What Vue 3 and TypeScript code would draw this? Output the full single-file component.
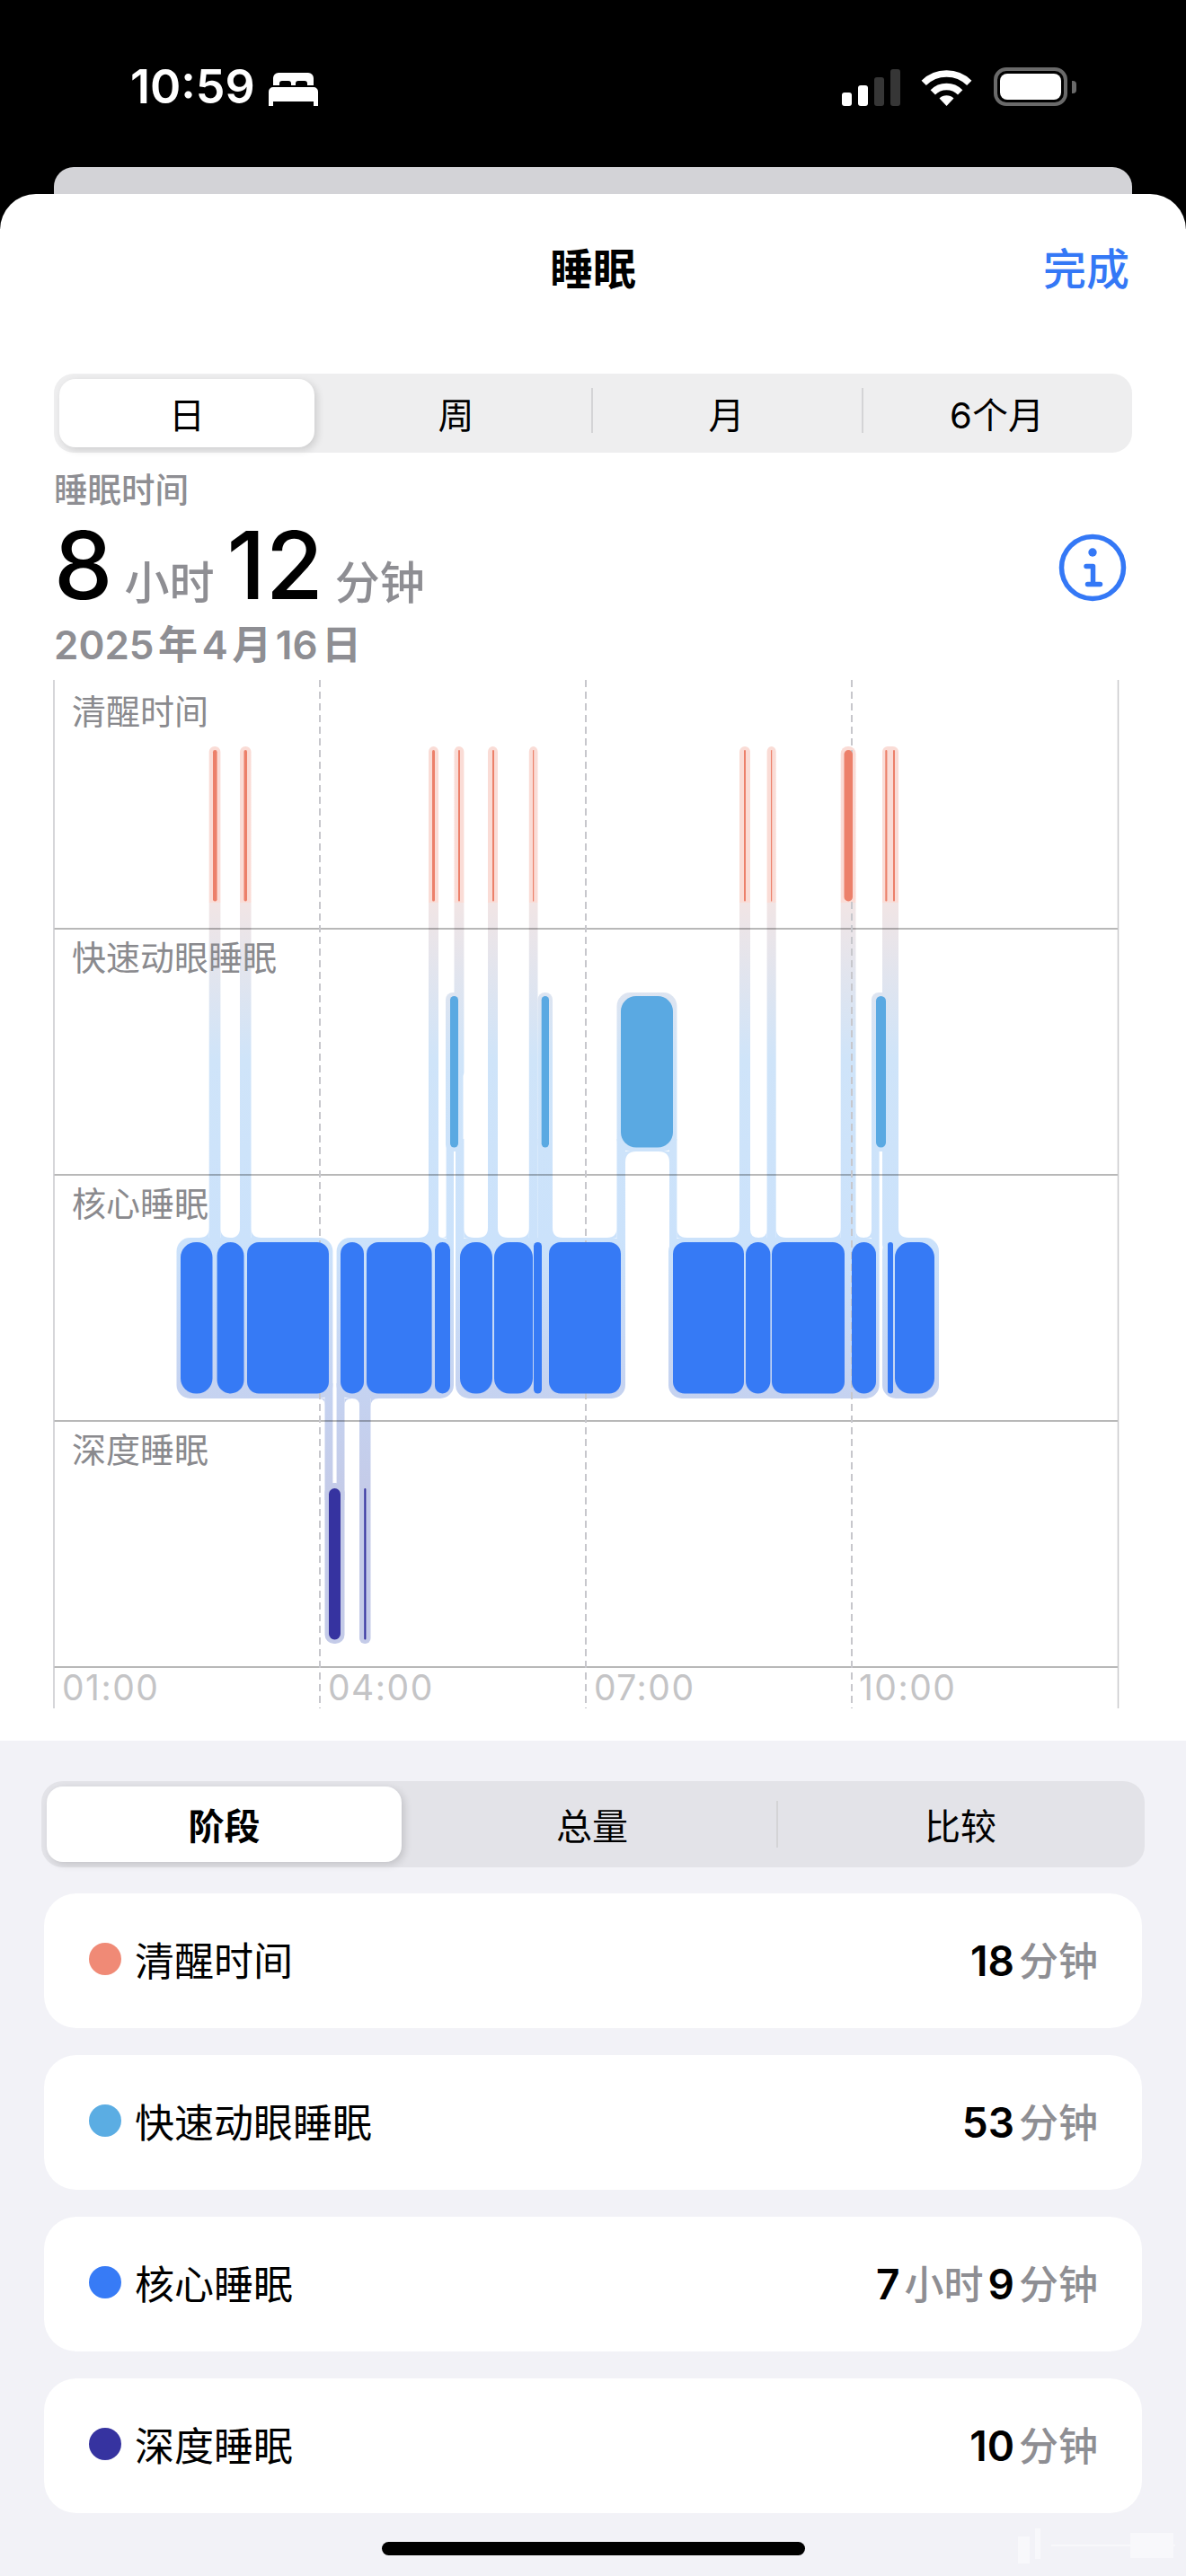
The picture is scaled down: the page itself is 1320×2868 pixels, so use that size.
<template>
  <div class="page">
    <!-- status bar -->
    <div class="statusbar">
      <div class="status-left">
        <span class="clock">10:59</span>
        <svg class="bed" width="55" height="37" viewBox="0 0 55 37">
          <path d="M5 14V6a6 6 0 0 1 6-6h33a6 6 0 0 1 6 6v8h-7v-2a3 3 0 0 0-3-3H33a3 3 0 0 0-3 3v2h-5v-2a3 3 0 0 0-3-3H15a3 3 0 0 0-3 3v2z" fill="#fff" />
          <path d="M0 21a5 5 0 0 1 5-5h45a5 5 0 0 1 5 5v16h-5v-5H5v5H0z" fill="#fff" />
        </svg>
      </div>
      <div class="status-right">
        <div class="signal">
          <i v-for="(b, i) in signalBars" :key="i" :class="{ off: i > 1 }" :style="{ height: b + 'px' }" />
        </div>
        <svg class="wifi" width="57" height="41" viewBox="0 0 57 41">
          <path d="M3.2 15.3A36 36 0 0 1 53.8 15.3" fill="none" stroke="#fff" stroke-width="7.5" />
          <path d="M13.3 25.8A21.5 21.5 0 0 1 43.7 25.8" fill="none" stroke="#fff" stroke-width="7.5" />
          <path d="M28.5 41L20.5 32.5A11.5 11.5 0 0 1 36.5 32.5Z" fill="#fff" />
        </svg>
        <div class="battery">
          <div class="battery-body"><div class="battery-fill" /></div>
          <div class="battery-nub" />
        </div>
      </div>
    </div>
    <div class="peek" />

    <div class="sheet">
      <div class="nav">
        <span class="nav-title">睡眠</span>
        <span class="nav-done">完成</span>
      </div>

      <div class="segment top-seg">
        <div v-for="(s, i) in rangeTabs" :key="s" class="seg-item" :class="{ active: i === 0, divided: i === 3 || i === 2 }">
          {{ s }}
        </div>
      </div>

      <div class="summary">
        <div class="summary-text">
          <div class="summary-label">睡眠时间</div>
          <div class="summary-value">
            <span class="big">8</span><span class="unit">小时</span><span class="big">12</span><span class="unit">分钟</span>
          </div>
          <div class="summary-date">2025<i>年</i>4<i>月</i>16<i>日</i></div>
        </div>
        <svg class="info" width="76" height="76" viewBox="0 0 76 76">
          <circle cx="38" cy="38" r="34.5" fill="none" stroke="#3478f6" stroke-width="5.5" />
          <circle cx="38" cy="21" r="4.7" fill="#3478f6" />
          <path d="M31 36.5h7.5V56M32.5 56.5h14" fill="none" stroke="#3478f6" stroke-width="5.5" stroke-linecap="round" stroke-linejoin="round" />
        </svg>
      </div>

      <svg class="chart" width="1320" height="1145" viewBox="0 757 1320 1145">
        <defs>
          <linearGradient id="halo" gradientUnits="userSpaceOnUse" x1="0" y1="831" x2="0" y2="1830">
            <stop v-for="s in haloStops" :key="s.offset" :offset="s.offset" :stop-color="s.color" />
          </linearGradient>
        </defs>

        <!-- halo layer -->
        <g fill="url(#halo)">
          <rect v-for="(b, i) in blocks" :key="'b' + i" :x="b.x1" y="1378" :width="b.x2 - b.x1" height="179" rx="15" />
          <rect v-for="(c, i) in legs" :key="'l' + i" :x="c.x1" :y="c.y1" :width="c.x2 - c.x1" :height="c.y2 - c.y1" :rx="c.r ?? 0" />
          <path v-for="(d, i) in fillets" :key="'f' + i" :d="d" />
        </g>

        <!-- grid -->
        <line v-for="y in hLines" :key="y" class="hline" x1="60" x2="1245" :y1="y" :y2="y" />
        <line v-for="x in edgeLines" :key="x" class="edge" :x1="x" :x2="x" y1="757" y2="1902" />
        <line v-for="x in dashLines" :key="x" class="dash" :x1="x" :x2="x" y1="757" y2="1902" />

        <!-- stage bars -->
        <rect v-for="(b, i) in bars" :key="'s' + i" :x="b.x1" :y="b.y" :width="b.x2 - b.x1" height="168.5" :rx="barRadius(b.x2 - b.x1)" :fill="b.color" />

        <text v-for="l in stageLabels" :key="l.text" class="stage-label" x="80" :y="l.y">{{ l.text }}</text>
        <text v-for="t in timeLabels" :key="t.text" class="time-label" :x="t.x" y="1893">{{ t.text }}</text>
      </svg>

      <div class="lower">
        <div class="segment low-seg">
          <div v-for="(s, i) in viewTabs" :key="s" class="seg-item" :class="{ active: i === 0, divided: i === 2 }">
            {{ s }}
          </div>
        </div>

        <div class="rows">
          <div v-for="r in rows" :key="r.name" class="row">
            <span class="dot" :style="{ background: r.color }" />
            <span class="row-name">{{ r.name }}</span>
            <span class="row-value">
              <template v-for="(p, i) in r.parts" :key="i">
                <b v-if="i % 2 === 0">{{ p }}</b><span v-else>{{ p }}</span>
              </template>
            </span>
          </div>
        </div>

        <div class="home-bar" />
      </div>
    </div>

    <!-- faint watermark in the corner -->
    <div class="mark">
      <i class="mark-a" /><i class="mark-b" /><i class="mark-c" /><i class="mark-d" />
    </div>
  </div>
</template>

<script setup lang="ts">
interface Leg { x1: number; x2: number; y1: number; y2: number; r?: number }
type Range = [number, number]

const signalBars = [15, 23, 32, 41]
const rangeTabs = ['日', '周', '月', '6个月']
const viewTabs = ['阶段', '总量', '比较']

const rows = [
  { name: '清醒时间', color: '#f08a76', parts: ['18', '分钟'] },
  { name: '快速动眼睡眠', color: '#5bade3', parts: ['53', '分钟'] },
  { name: '核心睡眠', color: '#377bf6', parts: ['7', '小时', '9', '分钟'] },
  { name: '深度睡眠', color: '#3633a0', parts: ['10', '分钟'] },
]

const hLines = [1034, 1308, 1582, 1856]
const edgeLines = [60, 1244.5]
const dashLines = [356, 652, 948]

const stageLabels = [
  { text: '清醒时间', y: 806 },
  { text: '快速动眼睡眠', y: 1080 },
  { text: '核心睡眠', y: 1354 },
  { text: '深度睡眠', y: 1628 },
]
const timeLabels = [
  { text: '01:00', x: 69 },
  { text: '04:00', x: 365 },
  { text: '07:00', x: 661 },
  { text: '10:00', x: 956 },
]

// y positions of each stage
const AWAKE = 835
const REM = 1109
const CORE = 1383
const DEEP = 1657

const color = { awake: '#ec806a', rem: '#5aa9e2', core: '#367af5', deep: '#3633a0' }

const awakeBars: Range[] = [[237, 241.6], [271.5, 275], [481, 484], [510, 512], [548, 550], [593, 594.2], [828, 830], [858, 859.2], [939.5, 949], [985.3, 987.4], [994, 996]]
const remBars: Range[] = [[501, 510], [602.7, 611], [691, 749], [975, 986]]
const coreBars: Range[] = [[201, 236.5], [241.6, 271.5], [275, 366], [379, 405], [408, 480.6], [484, 501], [512, 548], [550, 593], [594, 603], [611, 691], [749, 828], [830, 857.4], [859, 940], [948, 975], [988, 994], [996, 1040]]
const deepBars: Range[] = [[366, 379], [405.3, 407.4]]

const toBars = (list: Range[], y: number, c: string) => list.map(([x1, x2]) => ({ x1, x2, y, color: c }))
const bars = [
  ...toBars(awakeBars, AWAKE, color.awake),
  ...toBars(remBars, REM, color.rem),
  ...toBars(coreBars, CORE, color.core),
  ...toBars(deepBars, DEEP, color.deep),
]

function barRadius(w: number) {
  if (w > 60) return 13
  return Math.min(w / 2, 17)
}

const CORE_TOP = 1378
const CORE_BOTTOM = 1557

// light halo blocks behind the core row, with the legs that land on each one
const blocks: { x1: number; x2: number; legs: Range[] }[] = [
  { x1: 196.5, x2: 370.4, legs: [[232.7, 245.4], [267, 279.5]] },
  { x1: 374.6, x2: 505, legs: [[477, 488], [496.6, 505]] },
  { x1: 507, x2: 696, legs: [[507, 516.4], [543, 554], [588.8, 615], [686.5, 696]] },
  { x1: 744, x2: 978.6, legs: [[745, 753.4], [823, 835], [853.6, 863.7], [935.7, 952.5], [970, 978.6]] },
  { x1: 982, x2: 1045, legs: [[982, 1000]] },
]

const awakeLeg = (x1: number, x2: number, r = 6): Leg => ({ x1, x2, y1: 831, y2: 1392, r })
const remBox = (x1: number, x2: number, r = 8): Leg => ({ x1, x2, y1: 1105, y2: 1282, r })
const lowLeg = (x1: number, x2: number): Leg => ({ x1, x2, y1: 1268, y2: 1392 })

const legs: Leg[] = [
  awakeLeg(232.7, 245.4),
  awakeLeg(267, 279.5),
  awakeLeg(477, 488),
  { x1: 505.5, x2: 516.4, y1: 831, y2: 1200, r: 6 },
  awakeLeg(543, 554),
  { x1: 588.8, x2: 598.5, y1: 831, y2: 1392, r: 6 },
  awakeLeg(823, 835),
  awakeLeg(853.6, 863.7),
  awakeLeg(935.7, 952.5, 8),
  awakeLeg(982, 1000),
  remBox(496, 515.5),
  remBox(598.5, 615),
  remBox(686.5, 753.4, 15),
  remBox(970, 990),
  lowLeg(496.6, 505),
  lowLeg(507, 516.4),
  lowLeg(598.5, 615),
  lowLeg(686.5, 696),
  lowLeg(745, 753.4),
  lowLeg(970, 978.6),
  // into the deep row
  { x1: 361.5, x2: 370.4, y1: 1540, y2: 1670 },
  { x1: 374.6, x2: 383.5, y1: 1540, y2: 1670 },
  { x1: 361.5, x2: 383.5, y1: 1651, y2: 1830, r: 10 },
  { x1: 400, x2: 412.5, y1: 1540, y2: 1830, r: 6 },
]

function fillet(cx: number, cy: number, sx: number, sy: number, r: number) {
  return `M${cx} ${cy}L${cx + sx * r} ${cy}Q${cx} ${cy} ${cx} ${cy + sy * r}Z`
}

// rounded joins where a leg meets a block or a box
function buildFillets() {
  const out: string[] = []
  for (const b of blocks) {
    b.legs.forEach((l, i) => {
      const leftGap = l[0] - (i > 0 ? b.legs[i - 1][1] : b.x1)
      const rightGap = (i < b.legs.length - 1 ? b.legs[i + 1][0] : b.x2) - l[1]
      if (leftGap > 2) out.push(fillet(l[0], CORE_TOP, -1, -1, Math.min(11, leftGap / 2)))
      if (rightGap > 2) out.push(fillet(l[1], CORE_TOP, 1, -1, Math.min(11, rightGap / 2)))
    })
  }
  // underside of the core row
  out.push(fillet(361.5, CORE_BOTTOM, -1, 1, 7))
  out.push(fillet(383.5, CORE_BOTTOM, 1, 1, 8))
  out.push(fillet(400, CORE_BOTTOM, -1, 1, 8))
  out.push(fillet(412.5, CORE_BOTTOM, 1, 1, 9))
  // arch under the wide REM box
  out.push(fillet(696, 1282, 1, 1, 12))
  out.push(fillet(745, 1282, -1, 1, 12))
  return out
}
const fillets = buildFillets()

const offset = (y: number) => (y - 831) / 999
const haloStops = [
  { offset: offset(831), color: '#fadcd6' },
  { offset: offset(1005), color: '#fadcd6' },
  { offset: offset(1005.5), color: '#f1e5e5' },
  { offset: offset(1180), color: '#cfe4f9' },
  { offset: offset(1380), color: '#cbe2fb' },
  { offset: offset(1557), color: '#c5d2f0' },
  { offset: offset(1660), color: '#c4cbe8' },
  { offset: offset(1830), color: '#c4cbe8' },
]
</script>

<style>
html, body {
  margin: 0;
  background: #000;
}
</style>

<style scoped>
.page {
  position: relative;
  width: 1320px;
  height: 2868px;
  background: #000;
  overflow: hidden;
  font-family: Inter, "Noto Sans CJK SC", sans-serif;
  color: #000;
}

.statusbar {
  height: 186px;
  box-sizing: border-box;
  padding: 72px 122px 0 145px;
  display: flex;
  justify-content: space-between;
  align-items: flex-start;
}
.status-left {
  display: flex;
  align-items: center;
  gap: 15px;
}
.clock {
  color: #fff;
  font-size: 52px;
  line-height: 50px;
  font-weight: 600;
}
.bed { margin-top: 4px; }
.status-right {
  display: flex;
  align-items: flex-end;
  padding-top: 4px;
}
.signal {
  display: flex;
  align-items: flex-end;
  gap: 7px;
  height: 41px;
}
.signal i {
  display: block;
  width: 11px;
  border-radius: 3px;
  background: #fff;
}
.signal i.off { background: #363636; }
.wifi { margin-left: 23px; }
.battery {
  display: flex;
  align-items: center;
  margin-left: 24px;
  height: 43px;
  margin-top: -1px;
}
.battery-body {
  width: 82px;
  height: 43px;
  box-sizing: border-box;
  border: 4px solid #6a6a6a;
  border-radius: 14px;
  padding: 3px;
}
.battery-fill {
  width: 100%;
  height: 100%;
  background: #fff;
  border-radius: 8px;
}
.battery-nub {
  width: 5px;
  height: 14px;
  margin-left: 5px;
  background: #6a6a6a;
  border-radius: 0 4px 4px 0;
}

.peek {
  height: 30px;
  margin: 0 60px;
  background: #d3d3d7;
  border-radius: 22px 22px 0 0;
}

.sheet {
  background: #fff;
  border-radius: 40px 40px 0 0;
  height: 2652px;
  overflow: hidden;
}

.nav {
  display: flex;
  justify-content: center;
  position: relative;
  padding-top: 51px;
  height: 142px;
  box-sizing: border-box;
}
.nav-title {
  font-size: 48px;
  line-height: 66px;
  font-weight: 600;
}
.nav-done {
  position: absolute;
  right: 63px;
  top: 51px;
  font-size: 48px;
  line-height: 66px;
  font-weight: 500;
  color: #3478f6;
}

.segment {
  display: flex;
  position: relative;
  box-sizing: border-box;
  padding: 6px 0 6px 6px;
}
.seg-item {
  flex: 1;
  display: flex;
  align-items: center;
  justify-content: center;
  position: relative;
  font-size: 40px;
  font-weight: 400;
}
.seg-item.active {
  background: #fff;
  box-shadow: 3px 3px 8px rgba(0, 0, 0, 0.14);
  margin-right: 7px;
}
.seg-item.divided::before {
  content: "";
  position: absolute;
  left: 0;
  width: 2px;
  background: #d4d4d6;
}

.top-seg {
  margin: 58px 60px 0;
  height: 88px;
  background: #eeeeef;
  border-radius: 22px;
}
.top-seg .seg-item.active {
  border-radius: 18px;
  flex: 0 0 284px;
}
.top-seg .seg-item.divided::before {
  top: 10px;
  bottom: 16px;
}

.summary {
  display: flex;
  justify-content: space-between;
  align-items: flex-start;
  padding: 18px 66px 0 60px;
}
.summary-label {
  font-size: 37.5px;
  line-height: 48px;
  font-weight: 500;
  color: #8e8e93;
}
.summary-value {
  display: flex;
  align-items: baseline;
  height: 92px;
  margin-top: 13px;
}
.big {
  font-size: 104px;
  line-height: 92px;
  font-weight: 500;
}
.unit {
  font-size: 50px;
  line-height: 60px;
  font-weight: 500;
  color: #8e8e93;
  margin: 0 14px 0 13px;
}
.summary-date {
  margin-top: 18px;
  font-size: 44px;
  line-height: 50px;
  font-weight: 600;
  color: #8e8e93;
}
.summary-date i {
  font-style: normal;
  margin: 0 4.5px;
}
.info { margin-top: 72px; }

.chart {
  display: block;
  margin-top: 14px;
}
.hline {
  stroke: #000;
  stroke-opacity: 0.28;
  stroke-width: 2;
}
.edge {
  stroke: #c9c9cc;
  stroke-width: 1.5;
}
.dash {
  stroke: #c7c7cc;
  stroke-width: 2;
  stroke-dasharray: 8 5;
}
.stage-label {
  font-size: 38px;
  fill: #8a8a8e;
}
.time-label {
  font-size: 39px;
  letter-spacing: 1.5px;
  fill: #c4c4c6;
}

.lower {
  margin-top: 36px;
  background: #f2f2f7;
  height: 930px;
  box-sizing: border-box;
  padding-top: 45px;
}
.low-seg {
  margin: 0 46px;
  height: 96px;
  background: #e3e3e8;
  border-radius: 24px;
}
.low-seg .seg-item.active {
  flex: 0 0 395px;
  border-radius: 18px;
  font-weight: 600;
}
.low-seg .seg-item.divided::before {
  top: 16px;
  bottom: 16px;
}

.rows {
  display: flex;
  flex-direction: column;
  gap: 30px;
  margin: 29px 49px 0;
}
.row {
  height: 150px;
  box-sizing: border-box;
  background: #fff;
  border-radius: 36px;
  display: flex;
  align-items: center;
  padding: 0 49px 5px 50px;
}
.dot {
  width: 36px;
  height: 36px;
  border-radius: 50%;
}
.row-name {
  margin-left: 15px;
  font-size: 44px;
  flex: 1;
}
.row-value {
  display: flex;
  align-items: baseline;
  font-size: 44px;
  gap: 5px;
  color: #8e8e93;
  font-weight: 500;
}
.row-value b {
  color: #000;
  font-size: 46px;
  font-weight: 600;
}

.home-bar {
  width: 471px;
  height: 15px;
  margin: 32px auto 0;
  background: #000;
  border-radius: 8px;
}

.mark {
  position: absolute;
  left: 1130px;
  top: 2812px;
  width: 178px;
  height: 46px;
  opacity: 0.75;
}
.mark i {
  position: absolute;
  display: block;
  background: #fbfbfd;
}
.mark-a { left: 3px; top: 12px; width: 13px; height: 30px; }
.mark-b { left: 22px; top: 3px; width: 6px; height: 34px; }
.mark-c { left: 40px; top: 21px; width: 138px; height: 2px; }
.mark-d { left: 128px; top: 8px; width: 48px; height: 28px; }
</style>
